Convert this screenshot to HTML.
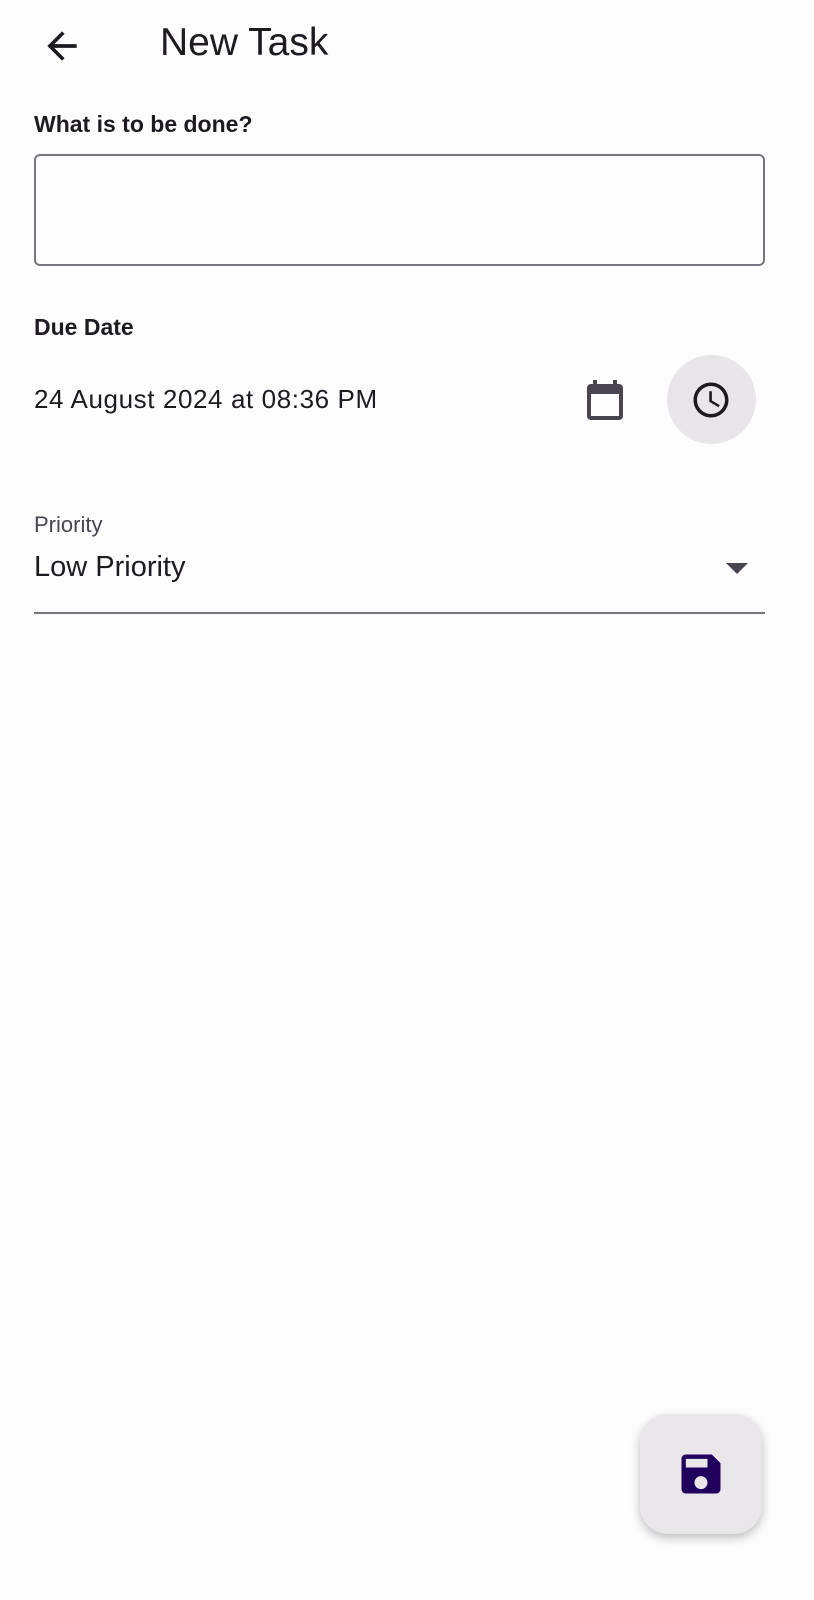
<!DOCTYPE html>
<html><head><meta charset="utf-8"><style>
body{margin:0;width:814px;height:1600px;background:#fefdfe;font-family:"Liberation Sans",sans-serif;color:#1d1b20;position:relative;overflow:hidden}
.a{position:absolute}
</style></head><body>
<svg class="a" style="left:40px;top:24px" width="44" height="44" viewBox="0 0 24 24"><path d="M20 11H7.830l5.59-5.59L12 4l-8 8 8 8 1.41-1.41L7.83 13H20v-2z" fill="#1d1b20"/></svg>
<div class="a" style="left:160px;top:21px;font-size:39px;">New Task</div>
<div class="a" style="left:34px;top:111px;font-size:23px;font-weight:bold;">What is to be done?</div>
<div class="a" style="left:34px;top:154px;border:2px solid #79757f;border-radius:6px;width:727px;height:108px"></div>
<div class="a" style="left:34px;top:314px;font-size:23px;font-weight:bold;">Due Date</div>
<div class="a" style="left:34px;top:384px;font-size:26px;letter-spacing:0.6px">24 August 2024 at 08:36 PM</div>
<svg class="a" style="left:581px;top:376px" width="48" height="48" viewBox="0 0 24 24"><path d="M19 4h-1V2h-2v2H8V2H6v2H5c-1.1 0-2 .9-2 2v14c0 1.1.9 2 2 2h14c1.1 0 2-.9 2-2V6c0-1.1-.9-2-2-2zm0 16H5V9h14v11z" fill="#49454f"/></svg>
<div class="a" style="left:667px;top:355px;width:89px;height:89px;border-radius:50%;background:#e8e6e9"></div>
<svg class="a" style="left:690px;top:379px" width="42" height="42" viewBox="0 0 24 24"><path d="M11.99 2C6.47 2 2 6.48 2 12s4.47 10 9.99 10C17.52 22 22 17.52 22 12S17.52 2 11.99 2zM12 20c-4.42 0-8-3.58-8-8s3.58-8 8-8 8 3.58 8 8-3.58 8-8 8zm.5-13H11v6l5.25 3.15.75-1.23-4.5-2.67z" fill="#1d1b20"/></svg>
<div class="a" style="left:34px;top:512px;font-size:22px;color:#49454f">Priority</div>
<div class="a" style="left:34px;top:551px;font-size:29px;">Low Priority</div>
<svg class="a" style="left:724px;top:561px" width="26" height="14" viewBox="0 0 26 14"><path d="M2 2h22L13 13z" fill="#49454f"/></svg>
<div class="a" style="left:34px;top:612px;width:731px;height:2px;background:#79757f"></div>
<div class="a" style="left:640px;top:1414px;width:122px;height:120px;border-radius:28px;background:#e9e7ea;box-shadow:0 4px 10px rgba(0,0,0,0.25)"></div>
<svg class="a" style="left:675px;top:1448px" width="52" height="52" viewBox="0 0 24 24"><path d="M17 3H5c-1.11 0-2 .9-2 2v14c0 1.1.89 2 2 2h14c1.1 0 2-.9 2-2V7l-4-4zm-5 16c-1.66 0-3-1.34-3-3s1.34-3 3-3 3 1.34 3 3-1.34 3-3 3zm3-10H5V5h10v4z" fill="#21005d"/></svg>
</body></html>
